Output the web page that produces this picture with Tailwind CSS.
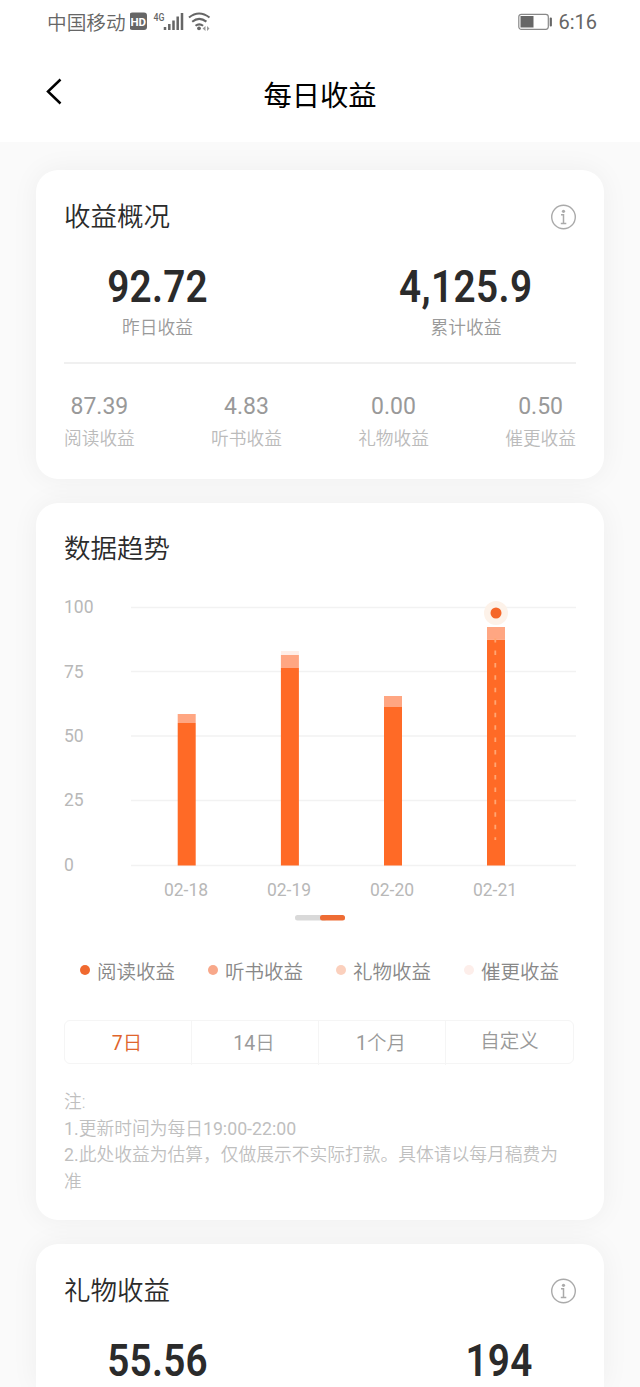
<!DOCTYPE html>
<html lang="zh-CN">
<head>
    <meta charset="UTF-8">
    <meta name="viewport" content="width=device-width, initial-scale=1.0">
    <title>每日收益</title>
    <script src="https://cdn.jsdelivr.net/npm/@tailwindcss/browser@4"></script>
</head>
<body class="bg-[#fafafa] font-['Roboto','Noto_Sans_CJK_SC',sans-serif] font-[350] text-[#2b2b2b]">
    <!-- Status bar and title -->
    <header class="bg-white h-[142px]">
        <div class="h-11 pl-[47px] pr-[43px] flex items-center justify-between text-[#666]">
            <div class="flex items-center">
                <span class="pt-[3px] text-[19.7px] leading-6">中国移动</span>
                <svg class="ml-1" width="82" height="24" viewBox="0 0 82 24" fill="none">
                    <rect x="-0.500" y="2.500" width="17.500" height="17.500" rx="3" fill="#666"/>
                    <text x="8.300" y="15.500" text-anchor="middle" font-size="11.500" font-weight="700" fill="#fff">HD</text>
                    <text x="23.500" y="10.500" font-size="11" font-weight="500" fill="#666" textLength="11" lengthAdjust="spacingAndGlyphs">4G</text>
                    <path d="M35 17v3M39.300 14v6M43.500 10.500v9.500M47.700 6.500v13.500M52 3v17" stroke="#666" stroke-width="2.500"/>
                    <g stroke="#666" stroke-width="2.100">
                        <path d="M59 7.500q10-8 20.500 0"/>
                        <path d="M62.200 11.700q7-5.600 14.200 0"/>
                        <path d="M65.500 15.800q3.800-3 7.600 0"/>
                    </g>
                    <circle cx="69" cy="18.300" r="1.900" fill="#666"/>
                    <path d="M75.500 16v5l-3-2.500zM77 16l2.500 2.500-2.500 2.500z" fill="#999"/>
                </svg>
            </div>
            <div class="flex items-center">
                <svg width="35" height="18" viewBox="0 0 35 18" fill="none">
                    <rect x="0.800" y="1.300" width="29.500" height="15" rx="2.500" stroke="#888" stroke-width="1.200"/>
                    <rect x="2.500" y="3" width="13" height="11.500" fill="#666"/>
                    <rect x="31.700" y="4.500" width="2.200" height="9" rx="1" fill="#666"/>
                </svg>
                <span class="ml-[5px] text-[20px] leading-6 font-normal">6:16</span>
            </div>
        </div>
        <div class="h-[98px] px-[46px] grid grid-cols-3 items-center">
            <svg class="-mt-1" width="16" height="27" viewBox="0 0 16 27" fill="none">
                <path d="M14.500 1.500 2 13.500l12.500 12" stroke="#000" stroke-width="2.500"/>
            </svg>
            <h1 class="pt-[7px] text-center text-[28.3px] leading-10 font-normal text-black whitespace-nowrap">每日收益</h1>
        </div>
    </header>

    <main class="h-[1245px] overflow-hidden px-9 pt-7 flex flex-col gap-6">
        <!-- Overview -->
        <section class="shrink-0 bg-white rounded-[22px] shadow-[0_0_28px_rgba(0,0,0,0.05)] px-7 pt-[27px] h-[309px]">
            <div class="flex items-center justify-between">
                <h2 class="text-[26.5px] leading-10">收益概况</h2>
                <svg width="26" height="26" viewBox="0 0 26 26" fill="none" stroke="#aaa">
                    <circle cx="13.500" cy="13" r="11.800" stroke-width="1.400"/>
                    <circle cx="13.500" cy="7.300" r="1.600" fill="#aaa" stroke="none"/>
                    <path d="M11 10.800h2.500v8.700M10.800 19.500h5.500" stroke-width="1.500"/>
                </svg>
            </div>
            <div class="mt-[26px] px-[43px] flex justify-between">
                <div class="w-[101px] flex flex-col items-center">
                    <span class="text-[45px] leading-[48px] font-semibold tracking-[0.3px] scale-x-[0.86]">92.72</span>
                    <span class="mt-[5px] text-[17.7px] leading-6 text-[#999]">昨日收益</span>
                </div>
                <div class="w-[134px] flex flex-col items-center">
                    <span class="text-[45px] leading-[48px] font-semibold tracking-[0.5px] scale-x-[0.86]">4,125.9</span>
                    <span class="mt-[5px] text-[17.7px] leading-6 text-[#999]">累计收益</span>
                </div>
            </div>
            <div class="mt-[22px] h-0.5 bg-[#f0f0f0]"></div>
            <div class="mt-7 flex justify-between text-center">
                <div>
                    <p class="pt-px text-[23px] leading-7 text-[#999] font-normal">87.39</p>
                    <p class="mt-1.5 text-[17.7px] leading-6 text-[#bbb]">阅读收益</p>
                </div>
                <div>
                    <p class="pt-px text-[23px] leading-7 text-[#999] font-normal">4.83</p>
                    <p class="mt-1.5 text-[17.7px] leading-6 text-[#bbb]">听书收益</p>
                </div>
                <div>
                    <p class="pt-px text-[23px] leading-7 text-[#999] font-normal">0.00</p>
                    <p class="mt-1.5 text-[17.7px] leading-6 text-[#bbb]">礼物收益</p>
                </div>
                <div>
                    <p class="pt-px text-[23px] leading-7 text-[#999] font-normal">0.50</p>
                    <p class="mt-1.5 text-[17.7px] leading-6 text-[#bbb]">催更收益</p>
                </div>
            </div>
        </section>

        <!-- Trend -->
        <section class="shrink-0 bg-white rounded-[22px] shadow-[0_0_28px_rgba(0,0,0,0.05)] px-7 pt-[26px] h-[717px]">
            <h2 class="text-[26.5px] leading-10">数据趋势</h2>
            <svg class="mt-[21px] block" width="512" height="340" viewBox="64 590 512 340">
                <path d="M131 607.500h445M131 671.500h445M131 736h445M131 800.500h445M131 865.500h445" stroke="#f2f2f2" stroke-width="1.500"/>
                <g font-size="17.500" font-weight="400" fill="#b8b8b8">
                    <text x="64" y="613">100</text>
                    <text x="64" y="677.500">75</text>
                    <text x="64" y="742">50</text>
                    <text x="64" y="806">25</text>
                    <text x="64" y="870.500">0</text>
                </g>
                <g font-size="17.500" font-weight="400" fill="#b8b8b8" text-anchor="middle">
                    <text x="186" y="895.500">02-18</text>
                    <text x="289" y="895.500">02-19</text>
                    <text x="392" y="895.500">02-20</text>
                    <text x="495" y="895.500">02-21</text>
                </g>
                <g fill="#ff6a26">
                    <rect x="177.700" y="723" width="18" height="142.500"/>
                    <rect x="280.900" y="668" width="18" height="197.500"/>
                    <rect x="384" y="707" width="18" height="158.500"/>
                    <rect x="487" y="639.500" width="18" height="226"/>
                </g>
                <g fill="#ffa682">
                    <rect x="177.700" y="714" width="18" height="9"/>
                    <rect x="280.900" y="655" width="18" height="13"/>
                    <rect x="384" y="696" width="18" height="11"/>
                    <rect x="487" y="627" width="18" height="12.500"/>
                </g>
                <rect x="280.900" y="651" width="18" height="4" fill="#ffeee7"/>
                <path d="M495.300 638v202" stroke="#ffa673" stroke-width="1.800" stroke-dasharray="4.500 7.950"/>
                <circle cx="496" cy="613" r="12" fill="#fdf2e9"/>
                <circle cx="496" cy="613" r="5.500" fill="#f5672a"/>
                <rect x="295" y="915" width="32" height="5.500" rx="2.500" fill="#d9d9d9"/>
                <rect x="320" y="915" width="25" height="5.500" rx="2.500" fill="#ee6c34"/>
            </svg>
            <div class="mt-[31px] pl-4 flex gap-[33px] text-[19.5px] leading-6 text-[#888]">
                <div class="flex gap-[7px]"><i class="mt-1 size-[10px] rounded-full bg-[#f0692f]"></i>阅读收益</div>
                <div class="flex gap-[7px]"><i class="mt-1 size-[10px] rounded-full bg-[#f8a88a]"></i>听书收益</div>
                <div class="flex gap-[7px]"><i class="mt-1 size-[10px] rounded-full bg-[#fbd0bd]"></i>礼物收益</div>
                <div class="flex gap-[7px]"><i class="mt-1 size-[10px] rounded-full bg-[#fdeeea]"></i>催更收益</div>
            </div>
            <div class="mt-[35px] w-[510px] h-11 grid grid-cols-4 divide-x-[1.5px] divide-[#f5f5f5] border-[1.5px] border-[#f5f5f5] rounded-md text-center text-[19.5px] leading-[42px] text-[#999]">
                <div class="pt-0.5 pr-0.5 text-[#e0652c]"><span class="font-normal">7</span>日</div>
                <div class="pt-0.5 pr-0.5"><span class="font-normal">14</span>日</div>
                <div class="pt-0.5 pr-0.5"><span class="font-normal">1</span>个月</div>
                <div>自定义</div>
            </div>
            <div class="mt-[25px] pr-3 text-[17.75px] leading-[26.7px] text-[#bfbfbf]">
                <p>注:</p>
                <p><span class="font-normal">1.</span>更新时间为每日<span class="font-normal">19:00-22:00</span></p>
                <p><span class="font-normal">2.</span>此处收益为估算，仅做展示不实际打款。具体请以每月稿费为准</p>
            </div>
        </section>

        <!-- Gifts -->
        <section class="shrink-0 bg-white rounded-t-[22px] shadow-[0_0_28px_rgba(0,0,0,0.05)] px-7 pt-[27px] h-[143px]">
            <div class="flex items-center justify-between">
                <h2 class="text-[26.5px] leading-10">礼物收益</h2>
                <svg width="26" height="26" viewBox="0 0 26 26" fill="none" stroke="#aaa">
                    <circle cx="13.500" cy="13" r="11.800" stroke-width="1.400"/>
                    <circle cx="13.500" cy="7.300" r="1.600" fill="#aaa" stroke="none"/>
                    <path d="M11 10.800h2.500v8.700M10.800 19.500h5.500" stroke-width="1.500"/>
                </svg>
            </div>
            <div class="mt-[26px] px-[43px] flex justify-between">
                <div class="w-[101px] flex flex-col items-center">
                    <span class="text-[45px] leading-[48px] font-semibold tracking-[0.3px] scale-x-[0.86]">55.56</span>
                </div>
                <div class="w-[68px] flex flex-col items-center">
                    <span class="text-[45px] leading-[48px] font-semibold tracking-[0.3px] scale-x-[0.86]">194</span>
                </div>
            </div>
        </section>
    </main>
</body>
</html>
